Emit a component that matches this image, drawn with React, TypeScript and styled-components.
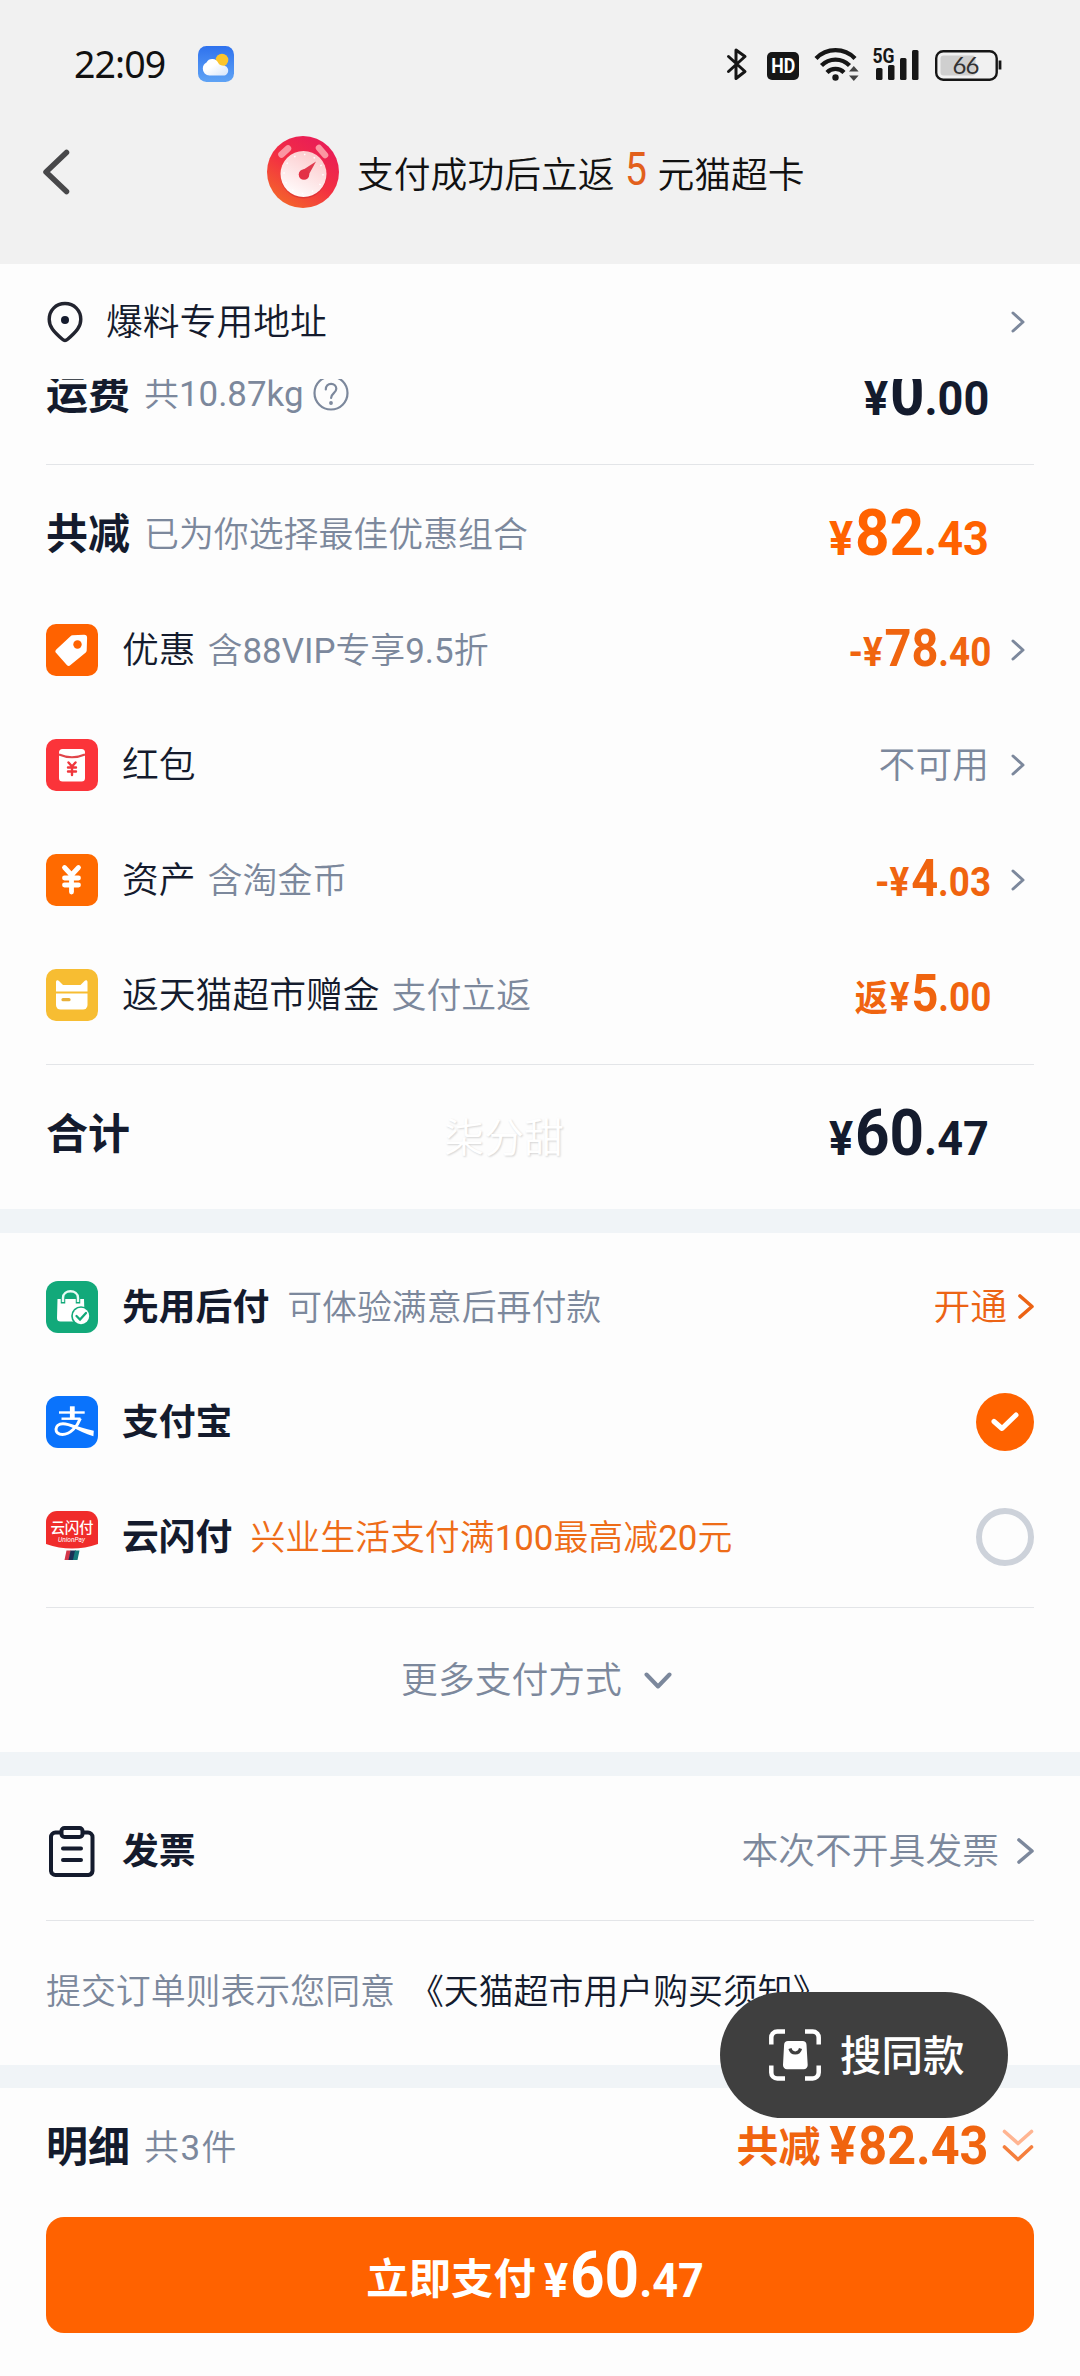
import React from "react";
import styled, { createGlobalStyle, css } from "styled-components";

const INK = "#141b2d";
const MUTED = "#7c889c";
const ORANGE = "#ff6200";
const SANS = `Roboto, "Noto Sans CJK SC", sans-serif`;

const GlobalStyle = createGlobalStyle`
  * { box-sizing: border-box; }
  body { margin: 0; background: #fdfdfd; }
`;

const Screen = styled.main`
  position: relative;
  display: flex;
  flex-direction: column;
  width: 1080px;
  height: 2376px;
  overflow: hidden;
  background: #fdfdfd;
  color: ${INK};
  font-family: ${SANS};
  font-size: 36.8px;
  font-weight: 350;
  line-height: 1.2;
  white-space: nowrap;
`;

/* ---------- top area ---------- */

const TopArea = styled.header`
  flex: none;
  height: 264px;
  background: #f1f1f1;
`;

const StatusBar = styled.div`
  display: flex;
  align-items: center;
  height: 131px;
  padding: 0 78px 3px 74px;
`;

const Clock = styled.span`
  width: 124px;
  font: 400 37.5px/1 "Noto Sans", sans-serif;
  letter-spacing: -0.9px;
  color: #111;
`;

const StatusIcons = styled.div`
  display: flex;
  align-items: center;
  margin-left: auto;
`;

const TitleBar = styled.div`
  display: flex;
  align-items: center;
  height: 82px;
  padding-left: 42px;
`;

const TitleText = styled.h1`
  display: flex;
  align-items: baseline;
  margin: 4px 0 0 18px;
  font-size: 36.8px;
  font-weight: 350;
  line-height: 1.2;
  color: #111;
`;

const TitleNumber = styled.span`
  margin: 0 9px 0 8px;
  font-size: 46px;
  font-weight: 400;
  line-height: 1;
  color: #e2601c;
  transform: translateY(-3px) scaleX(0.85);
`;

/* ---------- sections & rows ---------- */

const Section = styled.section<{ $h: number; $top?: number }>`
  flex: none;
  height: ${(p) => p.$h}px;
  padding: ${(p) => p.$top ?? 0}px 46px 0;
`;

const Band = styled.div<{ $h: number }>`
  flex: none;
  height: ${(p) => p.$h}px;
  background: #f0f4f7;
`;

const Row = styled.div<{ $h?: number; $pt?: number; $pb?: number }>`
  display: flex;
  flex: none;
  align-items: center;
  height: ${(p) => p.$h ?? 115}px;
  padding: ${(p) => p.$pt ?? 0}px 0 ${(p) => p.$pb ?? 0}px;
`;

/* The freight row is scrolled partly under the sticky address bar. */
const FreightClip = styled.div`
  display: flex;
  flex-direction: column;
  justify-content: flex-end;
  height: 85px;
  overflow: hidden;
`;

const Divider = styled.div`
  height: 1px;
  background: #e3e5e8;
`;

const Spacer = styled.div<{ $h: number }>`
  height: ${(p) => p.$h}px;
`;

const Heading = styled.strong`
  padding-top: 4px;
  font-size: 42px;
  font-weight: 700;
`;

const Label = styled.span<{ $bold?: boolean; $ml?: number }>`
  margin-left: ${(p) => p.$ml ?? 24}px;
  padding-top: 4px;
  font-weight: ${(p) => (p.$bold ? 700 : "inherit")};
`;

const HintText = styled.span<{ $ml?: number; $color?: string; $track?: number }>`
  margin-left: ${(p) => p.$ml ?? 14}px;
  padding-top: 4px;
  font-size: 34.9px;
  letter-spacing: ${(p) => p.$track ?? 0}px;
  color: ${(p) => p.$color ?? MUTED};
`;

const Latin = styled.span`
  font-weight: 400;
`;

/* Latin runs need a heavier cut than the Chinese text to look even. */
function Hint({ children, ml, color, track }: { children: string; ml?: number; color?: string; track?: number }) {
  return (
    <HintText $ml={ml} $color={color} $track={track}>
      {children.split(/([0-9A-Za-z.]+)/).map((part, i) => (i % 2 ? <Latin key={i}>{part}</Latin> : part))}
    </HintText>
  );
}

const Trailing = styled.div<{ $color?: string }>`
  display: flex;
  align-items: center;
  margin-left: auto;
  color: ${(p) => p.$color ?? INK};
`;

const ArrowSlot = styled.span`
  display: flex;
  width: 45px;
  padding-left: 22px;
  color: ${MUTED};
`;

const ArrowEnd = styled.span<{ $ml: number }>`
  display: flex;
  margin-left: ${(p) => p.$ml}px;
`;

const PriceBox = styled.span<{ $size: "lg" | "md" | "even"; $left?: boolean }>`
  display: inline-flex;
  align-items: baseline;
  font-weight: 700;
  line-height: 1.1;
  transform: scaleX(${(p) => (p.$size === "even" ? 0.95 : 0.92)});
  transform-origin: ${(p) => (p.$left ? "left" : "right")} center;
  ${(p) =>
    p.$size === "lg"
      ? css`--big: 65.5px; --small: 49px;`
      : p.$size === "md"
        ? css`--big: 51px; --small: 40px; margin-right: -2px;`
        : css`--big: 53px; --small: 53px;`}
  font-size: var(--small);
`;

const PriceMain = styled.span`
  font-size: var(--big);
`;

const PricePrefix = styled.span`
  margin-right: 2px;
  font-size: 36px;
`;

const PriceSign = styled.span`
  margin-right: 2px;
`;

function Price({ size = "lg", prefix, sign = "", whole, cents, left }: {
  size?: "lg" | "md" | "even"; prefix?: string; sign?: string; whole: string; cents: string; left?: boolean;
}) {
  return (
    <PriceBox $size={size} $left={left}>
      {prefix && <PricePrefix>{prefix}</PricePrefix>}
      <PriceSign>{sign}¥</PriceSign>
      <PriceMain>{whole}</PriceMain>
      <span>.{cents}</span>
    </PriceBox>
  );
}

const RadioOn = styled.span`
  display: flex;
  align-items: center;
  justify-content: center;
  width: 58px;
  height: 58px;
  border-radius: 50%;
  background: ${ORANGE};
`;

const RadioOff = styled.span`
  width: 58px;
  height: 58px;
  border: 6px solid #cdd2da;
  border-radius: 50%;
`;

const MoreRow = styled.div`
  display: flex;
  align-items: center;
  justify-content: center;
  gap: 22px;
  height: 144px;
  padding: 2px 7px 0 0;
  color: ${MUTED};
`;

const Agreement = styled.div`
  display: flex;
  height: 144px;
  align-items: center;
  font-size: 34.9px;
  color: ${MUTED};
`;

const AgreementLink = styled.span`
  margin-left: 14px;
  color: ${INK};
`;

const PayButton = styled.button`
  display: flex;
  align-items: center;
  justify-content: center;
  gap: 8px;
  width: 988px;
  height: 116px;
  padding: 0 0 0 4px;
  border: 0;
  border-radius: 18px;
  background: ${ORANGE};
  color: #fff;
  font-family: ${SANS};
  font-size: 42.4px;
  font-weight: 700;
`;

const SimilarPill = styled.div`
  position: absolute;
  left: 720px;
  top: 1992px;
  display: flex;
  align-items: center;
  gap: 19px;
  width: 288px;
  height: 126px;
  padding-left: 49px;
  border-radius: 63px;
  background: #3f3f3f;
  color: #fff;
  font-size: 41.5px;
  font-weight: 500;
`;

const PillText = styled.span`
  padding-top: 4px;
`;

const Watermark = styled.span`
  position: absolute;
  left: 444px;
  top: 1115px;
  color: #fff;
  font-size: 40px;
  text-shadow: 1px 1px 2px #d4d4d4;
`;

/* ---------- icons ---------- */

const ArrowRight = ({ w = 14, h = 22, sw = 3 }: { w?: number; h?: number; sw?: number }) => (
  <svg width={w} height={h} viewBox={`0 0 ${w} ${h}`} fill="none" stroke="currentColor" strokeWidth={sw} strokeLinecap="round" strokeLinejoin="round">
    <path d={`M2 2 L${w - 2} ${h / 2} L2 ${h - 2}`} />
  </svg>
);

const WeatherIcon = () => (
  <svg width="36" height="36" viewBox="0 0 36 36">
    <defs>
      <linearGradient id="sky" x1="0" y1="0" x2="0" y2="1"><stop stopColor="#2f72ee" /><stop offset="1" stopColor="#5fa3f5" /></linearGradient>
      <linearGradient id="cloud" x1="0" y1="0" x2="1" y2="1"><stop offset=".4" stopColor="#fff" /><stop offset="1" stopColor="#d5e4fa" /></linearGradient>
    </defs>
    <rect width="36" height="36" rx="8.5" fill="url(#sky)" />
    <circle cx="24" cy="14" r="6.3" fill="#fcc52c" />
    <path d="M11.5 29.500a6.700 6.700 0 0 1-6.700-6.900c0-3 1.600-5.300 3.700-6.200a6.500 6.500 0 0 1 11.800.700c.8 1.900 3 2.600 5.500 2.600 2.600 0 4.400 2.200 4.400 4.800 0 2.900-2 5-4.700 5z" fill="url(#cloud)" />
  </svg>
);

const StatusGlyphs = () => (
  <svg width="277" height="40" viewBox="0 0 277 40" fill="none" stroke="#161616">
    <g strokeWidth="3" strokeLinejoin="round" strokeLinecap="round">
      <path d="M3.500 12.500 20 27.500 11 34.500V6L20 12.500 3.500 27.500" />
    </g>
    <rect x="42" y="8" width="32" height="28" rx="5" fill="#161616" stroke="none" />
    <text x="46.300" y="29" textLength="24" lengthAdjust="spacingAndGlyphs" fontFamily="Roboto, sans-serif" fontWeight="700" fontSize="20" fill="#fff" stroke="none">HD</text>
    <g strokeWidth="4.300">
      <path d="M91 14.500a27 27 0 0 1 39 0" />
      <path d="M96.500 21.500a19.500 19.500 0 0 1 28 0" />
      <path d="M102 28.500a12 12 0 0 1 17 0" />
    </g>
    <circle cx="110.500" cy="33.500" r="3.200" fill="#161616" stroke="none" />
    <path d="M124 27.500h9.600L128.800 22zM124 31.500h9.600l-4.800 5.500z" fill="#444" stroke="none" />
    <text x="147.500" y="18.800" textLength="22" lengthAdjust="spacingAndGlyphs" fontFamily="Roboto, sans-serif" fontWeight="700" fontSize="21" fill="#161616" stroke="none">5G</text>
    <g fill="#161616" stroke="none">
      <rect x="151" y="24" width="6.500" height="12" rx="1.500" />
      <rect x="163" y="21" width="6.500" height="15" rx="1.500" />
      <rect x="175" y="14" width="6.500" height="22" rx="1.500" />
      <rect x="187" y="6" width="6.500" height="30" rx="1.500" />
    </g>
    <rect x="211.200" y="7.200" width="60.500" height="28.500" rx="7" strokeWidth="2.400" />
    <rect x="215.500" y="11.500" width="35" height="20" rx="3" fill="#cfcfcf" stroke="none" />
    <text x="227.500" y="30" textLength="27" fontFamily="Lato, sans-serif" fontWeight="400" fontSize="24" fill="#333" stroke="none">66</text>
    <path d="M275 16.500v9" strokeWidth="2.800" />
  </svg>
);

const BackArrow = () => (
  <svg width="28" height="46" viewBox="0 0 28 46" fill="none" stroke="#48484a" strokeWidth="5.500" strokeLinecap="round" strokeLinejoin="round">
    <path d="M24.500 3.500 4 23l20.500 19.500" />
  </svg>
);

const TitleIconSvg = styled.svg`
  margin-left: 197px;
`;

const StopwatchIcon = () => (
  <TitleIconSvg width="72" height="72" viewBox="0 0 72 72">
    <defs>
      <linearGradient id="watch" x1="0.150" y1=".95" x2=".7" y2=".1"><stop stopColor="#f4682a" /><stop offset=".55" stopColor="#f32f42" /><stop offset="1" stopColor="#ea1f55" /></linearGradient>
      <linearGradient id="dial" x1=".2" y1="1" x2=".7" y2="0"><stop stopColor="#fff" /><stop offset="1" stopColor="#fcc9cb" /></linearGradient>
    </defs>
    <circle cx="36" cy="36" r="36" fill="url(#watch)" />
    <path d="M14.500 18.500 21 12.500M52 12 58 19" stroke="#fb96a2" strokeWidth="6.500" strokeLinecap="round" />
    <circle cx="36.500" cy="39.500" r="23" fill="#c9222e" opacity=".45" />
    <circle cx="36.500" cy="38" r="23" fill="url(#dial)" />
    <circle cx="36.500" cy="38" r="19.500" fill="none" stroke="#fff" strokeWidth="1.500" strokeDasharray="1.500 8.700" />
    <path d="M33.500 35.500 49 25.500 40.500 41z" fill="#e03a4e" />
    <circle cx="37" cy="38.500" r="5.300" fill="#e33146" />
  </TitleIconSvg>
);

const PinIcon = () => (
  <svg width="38" height="42" viewBox="0 0 38 42">
    <path d="M19 2.500C9.800 2.500 3.200 9.500 3.200 18.300c0 7.200 4 12.200 13.200 20a4 4 0 0 0 5.200 0c9.200-7.800 13.200-12.800 13.200-20C34.800 9.500 28.200 2.500 19 2.500z" fill="none" stroke="#22242f" strokeWidth="3.400" />
    <circle cx="19" cy="19" r="4" fill={INK} />
  </svg>
);

const HelpBadge = styled.svg`
  margin-left: 9px;
`;

const HelpIcon = () => (
  <HelpBadge width="36" height="36" viewBox="0 0 36 36" fill="none" stroke={MUTED} strokeWidth="2.200" strokeLinecap="round">
    <circle cx="18" cy="18" r="16.500" />
    <path d="M12.800 14.500c0-3.500 2.300-5.700 5.300-5.700s5.200 2 5.200 5c0 4.200-5.200 4.600-5.200 9.200" />
    <circle cx="18" cy="28" r=".8" fill={MUTED} />
  </HelpBadge>
);

const Tile = ({ color, children, r = 10 }: { color: string; children: React.ReactNode; r?: number }) => (
  <svg width="52" height="52" viewBox="0 0 52 52">
    <rect width="52" height="52" rx={r} fill={color} />
    {children}
  </svg>
);

const TagIcon = () => (
  <Tile color={ORANGE}>
    <path d="M26.500 11.300 38 10.700a3 3 0 0 1 3.100 3l-.4 12.800a3 3 0 0 1-.9 2L24.500 41a2.500 2.500 0 0 1-3.700 0L10.200 29a2.500 2.500 0 0 1 .1-3.600L24.500 12.200a3 3 0 0 1 2-.9z" fill="#fff" />
    <circle cx="31.500" cy="20.500" r="4.200" fill={ORANGE} />
  </Tile>
);

const EnvelopeIcon = () => (
  <Tile color="#fb343a">
    <rect x="13" y="10" width="26" height="32.500" rx="3.500" fill="#fff" />
    <path d="M13 15.500q13 5.500 26 0" fill="none" stroke="#e0454a" strokeWidth="2.200" />
    <path d="M22.500 23.500 26 27.500l3.500-4M26 27.500V36M22 28.500h8M22 32.500h8" fill="none" stroke="#f0373c" strokeWidth="2.400" strokeLinecap="round" />
  </Tile>
);

const YuanIcon = () => (
  <Tile color="#ff6a00">
    <path d="M18.500 13.500 25.500 21l7-7.500M25.500 21v17M18.500 24h14M18.500 31h14" fill="none" stroke="#fff" strokeWidth="4.800" strokeLinecap="round" strokeLinejoin="round" />
  </Tile>
);

const CatCardIcon = () => (
  <Tile color="#f7bd32">
    <path d="M10 22.500V13c0-1.800 1.800-2.300 3-1l4 4h17.500l4-4c1.200-1.300 3-.8 3 1v9.500z" fill="#fff" />
    <path d="M10 24.500h31.500V36a4.500 4.500 0 0 1-4.500 4.500H14.500A4.500 4.500 0 0 1 10 36z" fill="#fff" />
    <path d="M17 30.700h6" stroke="#e8b03a" strokeWidth="3.200" strokeLinecap="round" />
  </Tile>
);

const BagIcon = () => (
  <Tile color="#12a97a" r={12}>
    <path d="M11.500 18h26.500l.6 19a3.500 3.500 0 0 1-3.500 3.500H14.500A3.500 3.500 0 0 1 11 37z" fill="#fff" />
    <path d="M17 22.500v-5.500c0-9.500 15-9.500 15 0v5.500" fill="none" stroke="#12a97a" strokeWidth="4.500" />
    <path d="M17 21v-4c0-9 15-9 15 0v4" fill="none" stroke="#e9fbf5" strokeWidth="2.400" />
    <circle cx="35" cy="35" r="9.800" fill="#12a97a" />
    <circle cx="35" cy="35" r="8.200" fill="#fff" />
    <path d="m30.500 35 3.500 3.500 6-6.500" fill="none" stroke="#12a97a" strokeWidth="2.300" strokeLinecap="round" />
  </Tile>
);

const AlipayIcon = () => (
  <Tile color="#0a73fc" r={12}>
    <g fill="none" stroke="#fff">
      <path d="M26.300 10.300V22.500" strokeWidth="4.800" />
      <path d="M13 16.500h25.700" strokeWidth="2.400" />
      <path d="M15.500 22.700h19" strokeWidth="2.400" />
      <path d="M34.300 22.500C31.500 30.500 24 38.500 16.500 38.500c-9 0-8.500-10.800.5-10.800 4.500 0 8.500 1.800 12.500 3.600" strokeWidth="3" />
    </g>
    <path d="M27.500 28.800c5 2.100 11.500 4.200 20.300 5.900l-.4 5.500c-8-2.500-15-5.900-21.400-9.200z" fill="#fff" />
  </Tile>
);

const UnionPayIcon = () => (
  <svg width="52" height="52" viewBox="0 0 52 52">
    <path d="M0 11A11 11 0 0 1 11 0h30a11 11 0 0 1 11 11v22q-26 9-52 0z" fill="#f02c2b" />
    <text x="4.500" y="22" textLength="43" fontFamily="Noto Sans CJK SC, sans-serif" fontWeight="500" fontSize="14.500" fill="#fff">云闪付</text>
    <text x="12" y="31" textLength="27" lengthAdjust="spacingAndGlyphs" fontFamily="Roboto, sans-serif" fontWeight="400" fontStyle="italic" fontSize="7.500" fill="#fff">UnionPay</text>
    <path d="M20.500 39.500h4.500l-2 9.500h-4.500z" fill="#d3374a" />
    <path d="M24.500 39.500H30l-2 9.500h-5.500z" fill="#1c2f55" />
    <path d="M29 39.500h4.500l-2 9.500H27z" fill="#16787b" />
  </svg>
);

const ClipboardIcon = () => (
  <svg width="52" height="52" viewBox="0 0 52 52" fill="none" stroke={INK} strokeWidth="4" strokeLinejoin="round" strokeLinecap="round">
    <path d="M15 7.500H9.500a4.500 4.500 0 0 0-4.500 4.500v34a4.500 4.500 0 0 0 4.500 4h33a4.500 4.500 0 0 0 4-4V12a4.500 4.500 0 0 0-4.500-4.500H37" />
    <rect x="15.500" y="3" width="21" height="9" rx="3" />
    <path d="M17 23.500h18M17 35h18" />
  </svg>
);

const ScanBagIcon = () => (
  <svg width="52" height="52" viewBox="0 0 52 52" fill="none" stroke="#fff" strokeWidth="4.500">
    <path d="M2.300 15.500V8.500a6 6 0 0 1 6-6H16M36 2.500h7.700a6 6 0 0 1 6 6v7M49.700 36.500v7a6 6 0 0 1-6 6H36M16 49.500H8.300a6 6 0 0 1-6-6v-7" />
    <path d="M19 12h14.500a4 4 0 0 1 4 3.700l1.200 20.300a4 4 0 0 1-4 4.200H18a4 4 0 0 1-4-4.200l1.100-20.300a4 4 0 0 1 3.900-3.700z" fill="#fff" stroke="none" />
    <path d="M21 19.500c1.500 6 9 6 10.500 0" stroke="#3f3f3f" strokeWidth="3.200" />
  </svg>
);

const DoubleDown = () => (
  <svg width="32" height="34" viewBox="0 0 32 34" fill="none" strokeWidth="3.600" strokeLinecap="round" strokeLinejoin="round">
    <path d="M2.500 2.500 16 14.500 29.500 2.500" stroke="#ffb592" />
    <path d="M2.500 18 16 30.500 29.500 18" stroke="#f57f3d" />
  </svg>
);

const DownArrow = () => (
  <svg width="28" height="18" viewBox="0 0 28 18" fill="none" stroke={MUTED} strokeWidth="4" strokeLinecap="round" strokeLinejoin="round">
    <path d="m2.500 2.500 11.500 12 11.500-12" />
  </svg>
);

/* ---------- page ---------- */

const benefits = [
  { icon: <TagIcon />, name: "优惠", hint: "含88VIP专享9.5折", value: <Price size="md" sign="-" whole="78" cents="40" />, arrow: true },
  { icon: <EnvelopeIcon />, name: "红包", value: <Label $ml={0}>不可用</Label>, muted: true, arrow: true },
  { icon: <YuanIcon />, name: "资产", hint: "含淘金币", value: <Price size="md" sign="-" whole="4" cents="03" />, arrow: true },
  { icon: <CatCardIcon />, name: "返天猫超市赠金", hint: "支付立返", value: <Price size="md" prefix="返" whole="5" cents="00" />, arrow: false },
];

export default function App() {
  return (
    <Screen>
      <GlobalStyle />
      <TopArea>
        <StatusBar>
          <Clock>22:09</Clock>
          <WeatherIcon />
          <StatusIcons><StatusGlyphs /></StatusIcons>
        </StatusBar>
        <TitleBar>
          <BackArrow />
          <StopwatchIcon />
          <TitleText>支付成功后立返<TitleNumber>5</TitleNumber>元猫超卡</TitleText>
        </TitleBar>
      </TopArea>

      <Section $h={945}>
        <Row>
          <PinIcon />
          <Label $ml={22}>爆料专用地址</Label>
          <Trailing><ArrowSlot><ArrowRight /></ArrowSlot></Trailing>
        </Row>
        <FreightClip>
          <Row $h={142}>
            <Heading>运费</Heading>
            <Hint>共10.87kg</Hint>
            <HelpIcon />
            <Trailing><Price whole="0" cents="00" /><ArrowSlot /></Trailing>
          </Row>
        </FreightClip>
        <Divider />
        <Row $h={127} $pt={10}>
          <Heading>共减</Heading>
          <Hint>已为你选择最佳优惠组合</Hint>
          <Trailing $color={ORANGE}><Price whole="82" cents="43" /><ArrowSlot /></Trailing>
        </Row>
        {benefits.map((b) => (
          <Row key={b.name}>
            {b.icon}
            <Label>{b.name}</Label>
            {b.hint && <Hint ml={12}>{b.hint}</Hint>}
            <Trailing $color={b.muted ? MUTED : "#f0640f"}>
              {b.value}
              <ArrowSlot>{b.arrow && <ArrowRight />}</ArrowSlot>
            </Trailing>
          </Row>
        ))}
        <Spacer $h={12} />
        <Divider />
        <Row $h={144} $pb={7}>
          <Heading>合计</Heading>
          <Trailing><Price whole="60" cents="47" /><ArrowSlot /></Trailing>
        </Row>
      </Section>

      <Band $h={24} />
      <Section $h={519} $top={16}>
        <Row>
          <BagIcon />
          <Label $bold>先用后付</Label>
          <Hint ml={18}>可体验满意后再付款</Hint>
          <Trailing $color="#ec6314">
            <Label $ml={0}>开通</Label>
            <ArrowEnd $ml={11}><ArrowRight w={16} h={25} sw={3.6} /></ArrowEnd>
          </Trailing>
        </Row>
        <Row>
          <AlipayIcon />
          <Label $bold>支付宝</Label>
          <Trailing>
            <RadioOn>
              <svg width="30" height="22" viewBox="0 0 30 22" fill="none" stroke="#fff" strokeWidth="5" strokeLinecap="round" strokeLinejoin="round">
                <path d="M4 10.500 12 17.500 26 4" />
              </svg>
            </RadioOn>
          </Trailing>
        </Row>
        <Row>
          <UnionPayIcon />
          <Label $bold>云闪付</Label>
          <Hint ml={18} color="#ee6c18">兴业生活支付满100最高减20元</Hint>
          <Trailing><RadioOff /></Trailing>
        </Row>
        <Spacer $h={13} />
        <Divider />
        <MoreRow>更多支付方式<DownArrow /></MoreRow>
      </Section>

      <Band $h={24} />
      <Section $h={289}>
        <Row $h={144} $pt={5}>
          <ClipboardIcon />
          <Label $bold>发票</Label>
          <Trailing $color={MUTED}>
            <Label $ml={0}>本次不开具发票</Label>
            <ArrowEnd $ml={18}><ArrowRight w={17} h={26} sw={3.6} /></ArrowEnd>
          </Trailing>
        </Row>
        <Divider />
        <Agreement>
          提交订单则表示您同意
          <AgreementLink>《天猫超市用户购买须知》</AgreementLink>
        </Agreement>
      </Section>

      <Band $h={23} />
      <Section $h={288}>
        <Row $h={129} $pb={12}>
          <Heading>明细</Heading>
          <Hint track={1.5}>共3件</Hint>
          <Trailing $color="#f0640f">
            <Heading>共减</Heading>
            <Price size="even" whole="82" cents="43" />
            <ArrowEnd $ml={14}><DoubleDown /></ArrowEnd>
          </Trailing>
        </Row>
        <PayButton>
          <span>立即支付</span>
          <Price left whole="60" cents="47" />
        </PayButton>
      </Section>

      <Watermark>柒分甜</Watermark>
      <SimilarPill><ScanBagIcon /><PillText>搜同款</PillText></SimilarPill>
    </Screen>
  );
}
